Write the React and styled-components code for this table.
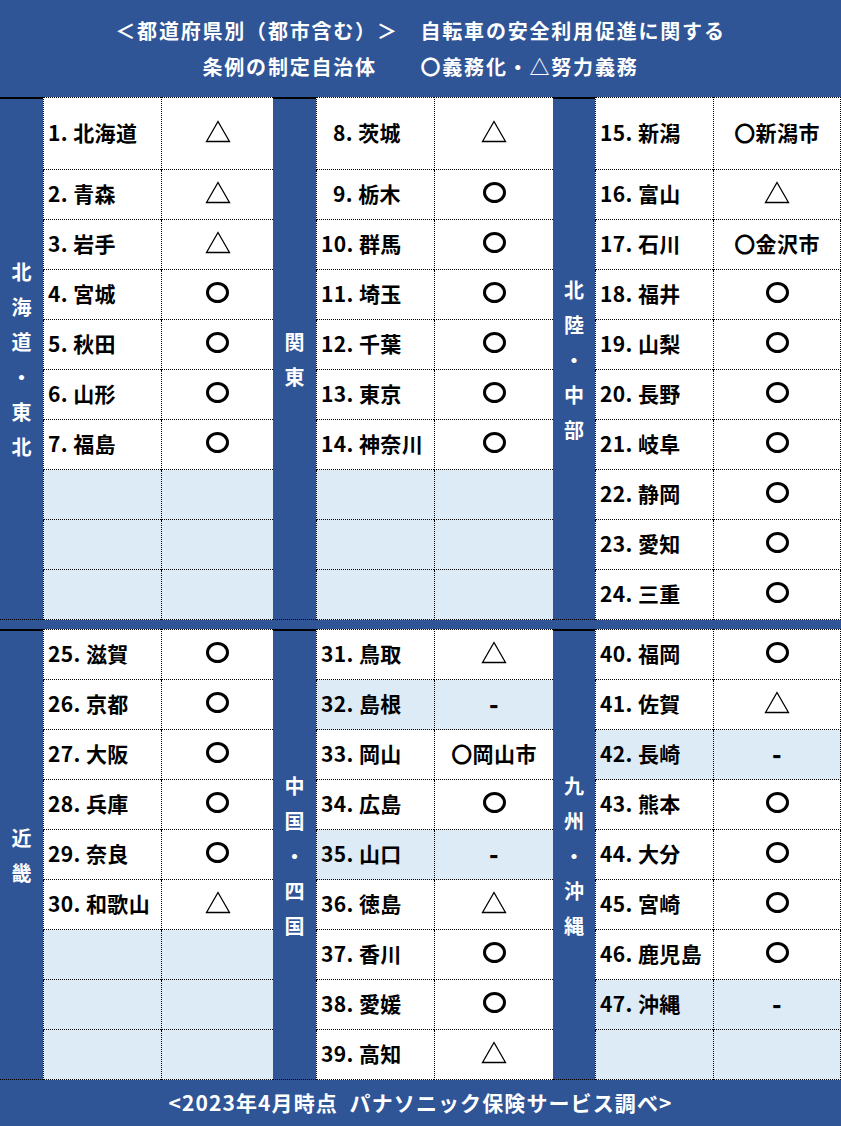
import styled, { createGlobalStyle } from "styled-components";

const BLUE = "#2F5597";
const SHADE = "#DDEBF7";

const topBlock = [
  {
    label: "北海道・東北",
    cols: [43, 118, 112],
    rows: [
      ["1. 北海道", "t"], ["2. 青森", "t"], ["3. 岩手", "t"], ["4. 宮城", "o"],
      ["5. 秋田", "o"], ["6. 山形", "o"], ["7. 福島", "o"], null, null, null,
    ],
  },
  {
    label: "関東",
    cols: [43, 118, 119],
    rows: [
      ["8. 茨城", "t", true], ["9. 栃木", "o", true], ["10. 群馬", "o"], ["11. 埼玉", "o"],
      ["12. 千葉", "o"], ["13. 東京", "o"], ["14. 神奈川", "o"], null, null, null,
    ],
  },
  {
    label: "北陸・中部",
    cols: [42, 118, 128],
    rows: [
      ["15. 新潟", "〇新潟市"], ["16. 富山", "t"], ["17. 石川", "〇金沢市"], ["18. 福井", "o"],
      ["19. 山梨", "o"], ["20. 長野", "o"], ["21. 岐阜", "o"], ["22. 静岡", "o"],
      ["23. 愛知", "o"], ["24. 三重", "o"],
    ],
  },
];

const bottomBlock = [
  {
    label: "近畿",
    cols: [43, 118, 112],
    rows: [
      ["25. 滋賀", "o"], ["26. 京都", "o"], ["27. 大阪", "o"], ["28. 兵庫", "o"],
      ["29. 奈良", "o"], ["30. 和歌山", "t"], null, null, null,
    ],
  },
  {
    label: "中国・四国",
    cols: [43, 118, 119],
    rows: [
      ["31. 鳥取", "t"], ["32. 島根", "-"], ["33. 岡山", "〇岡山市"], ["34. 広島", "o"],
      ["35. 山口", "-"], ["36. 徳島", "t"], ["37. 香川", "o"], ["38. 愛媛", "o"],
      ["39. 高知", "t"],
    ],
  },
  {
    label: "九州・沖縄",
    cols: [42, 118, 128],
    rows: [
      ["40. 福岡", "o"], ["41. 佐賀", "t"], ["42. 長崎", "-"], ["43. 熊本", "o"],
      ["44. 大分", "o"], ["45. 宮崎", "o"], ["46. 鹿児島", "o"], ["47. 沖縄", "-"],
      null,
    ],
  },
];

const GlobalStyle = createGlobalStyle`
  html, body {
    margin: 0;
    padding: 0;
    background: #fff;
  }
  body {
    font-family: "Noto Sans CJK JP", "Noto Sans", sans-serif;
    font-weight: 700;
  }
`;

const Page = styled.div`
  width: 841px;
  display: flex;
  flex-direction: column;
`;

const Header = styled.header`
  height: 97px;
  box-sizing: border-box;
  padding-top: 13px;
  background: ${BLUE};
  color: #fff;
  text-align: center;
  font-size: 20px;
  letter-spacing: 1.8px;
  line-height: 36px;
  white-space: pre;
`;

const Block = styled.section`
  display: flex;
`;

const Band = styled.div`
  height: 9px;
  background: ${BLUE};
`;

const Group = styled.div`
  display: grid;
  grid-template-columns: ${(p) => p.$cols.map((c) => `${c}px`).join(" ")};
  grid-template-rows: ${(p) => p.$rows};
`;

const Label = styled.div`
  grid-column: 1;
  grid-row: 1 / -1;
  background: ${BLUE};
  border-top: 2px solid #000;
  border-bottom: 1px dotted #000;
  color: #fff;
  display: flex;
  flex-direction: column;
  align-items: center;
  justify-content: center;
  font-size: 20px;
`;

const LabelChar = styled.span`
  line-height: 35px;
`;

const Cell = styled.div`
  box-sizing: border-box;
  padding-bottom: 4px;
  border-bottom: 1px dotted #000;
  border-left: 1px dotted #000;
  border-top: ${(p) => (p.$first ? "1px dotted #000" : "none")};
  border-right: ${(p) => (p.$edge ? "1px dotted #000" : "none")};
  background: ${(p) => (p.$shade ? SHADE : "#fff")};
  display: flex;
  align-items: center;
  font-size: 21px;
  letter-spacing: 0.4px;
  color: #000;
  white-space: pre;
`;

const NameCell = styled(Cell)`
  padding-left: ${(p) => (p.$indent ? 16 : 4)}px;
`;

const MarkCell = styled(Cell)`
  justify-content: center;
`;

const Circle = styled.span`
  width: 23px;
  height: 21px;
  box-sizing: border-box;
  border: 3px solid #000;
  border-radius: 50%;
`;

const Dash = styled.span`
  font-size: 25px;
  font-weight: 900;
`;

const Footer = styled.footer`
  height: 46px;
  box-sizing: border-box;
  padding-bottom: 2px;
  background: ${BLUE};
  color: #fff;
  display: flex;
  align-items: center;
  justify-content: center;
  font-size: 21px;
  letter-spacing: 1.1px;
  white-space: pre;
`;

function Triangle() {
  return (
    <svg width="26" height="23" viewBox="0 0 26 23">
      <polygon points="13,1.5 24.5,21.5 1.5,21.5" fill="none" stroke="#000" strokeWidth="1.3" />
    </svg>
  );
}

function Mark({ value }) {
  if (value === "o") return <Circle />;
  if (value === "t") return <Triangle />;
  if (value === "-") return <Dash>-</Dash>;
  return value;
}

function RegionGroup({ group, rowTemplate, edge }) {
  return (
    <Group $cols={group.cols} $rows={rowTemplate}>
      <Label>
        {[...group.label].map((ch, i) => (
          <LabelChar key={i}>{ch}</LabelChar>
        ))}
      </Label>
      {group.rows.map((row, i) => {
        const shade = !row || row[1] === "-";
        const first = i === 0;
        return [
          <NameCell key={`n${i}`} $first={first} $shade={shade} $indent={row && row[2]}>
            {row ? row[0] : ""}
          </NameCell>,
          <MarkCell key={`m${i}`} $first={first} $shade={shade} $edge={edge}>
            {row ? <Mark value={row[1]} /> : null}
          </MarkCell>,
        ];
      })}
    </Group>
  );
}

export default function App() {
  return (
    <>
      <GlobalStyle />
      <Page>
        <Header>
          {"＜都道府県別（都市含む）＞　自転車の安全利用促進に関する\n条例の制定自治体　　〇義務化・△努力義務"}
        </Header>
        <Block>
          {topBlock.map((g, i) => (
            <RegionGroup key={i} group={g} rowTemplate="73px repeat(9, 50px)" edge={i === 2} />
          ))}
        </Block>
        <Band />
        <Block>
          {bottomBlock.map((g, i) => (
            <RegionGroup key={i} group={g} rowTemplate="51px repeat(8, 50px)" edge={i === 2} />
          ))}
        </Block>
        <Footer>{"<2023年4月時点  パナソニック保険サービス調べ>"}</Footer>
      </Page>
    </>
  );
}
